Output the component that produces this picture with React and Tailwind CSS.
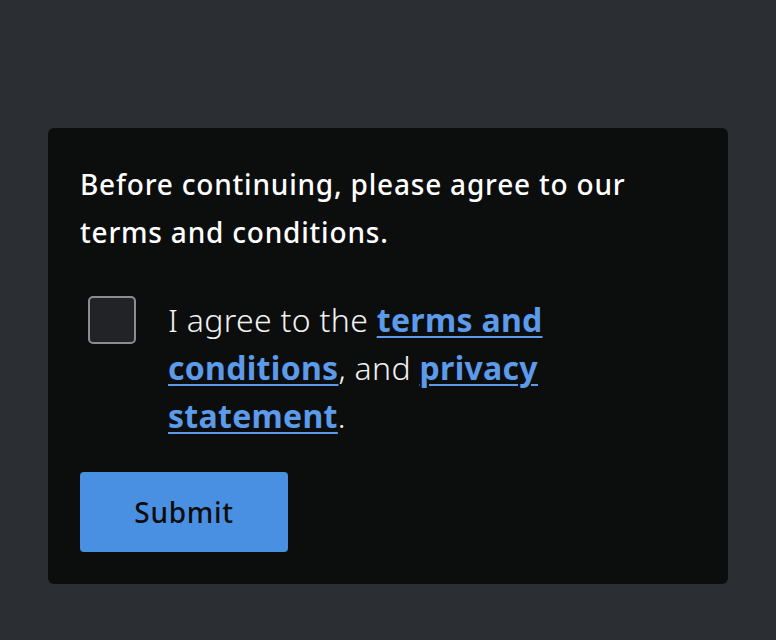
import React, { useState } from 'react';

export default function App() {
    const [checked, setChecked] = useState(false);

    return (
        <div className="min-h-[640px] w-full bg-[#2b2e33] pt-32 px-12" style={{ fontFamily: '"Noto Sans", "Open Sans", sans-serif' }}>
            <div className="bg-[#0c0d0d] rounded-md p-8 text-white">
                <p className="text-[28px] leading-[48px] font-medium tracking-[0.8px] max-w-[580px]">
                    Before continuing, please agree to our terms and conditions.
                </p>

                <div className="mt-10 flex items-start gap-8 pl-2">
                    <button
                        onClick={() => setChecked(!checked)}
                        className="w-12 h-12 shrink-0 rounded-[5px] border-2 border-[#8a8d91] bg-[#212326]"
                        aria-pressed={checked}
                    />
                    <p className="text-[32px] leading-[48px] font-light tracking-[0.3px] text-[#f2f2f2]">
                        I agree to the{' '}
                        <a href="#" className="font-bold text-[#5b9bea] underline decoration-2 underline-offset-4">terms and conditions</a>
                        , and{' '}
                        <a href="#" className="font-bold text-[#5b9bea] underline decoration-2 underline-offset-4">privacy statement</a>
                        .
                    </p>
                </div>

                <button className="mt-8 w-[208px] h-20 rounded bg-[#4a90e2] text-[#0c0d0d] text-[28px] font-medium tracking-wide">
                    Submit
                </button>
            </div>
        </div>
    );
}
